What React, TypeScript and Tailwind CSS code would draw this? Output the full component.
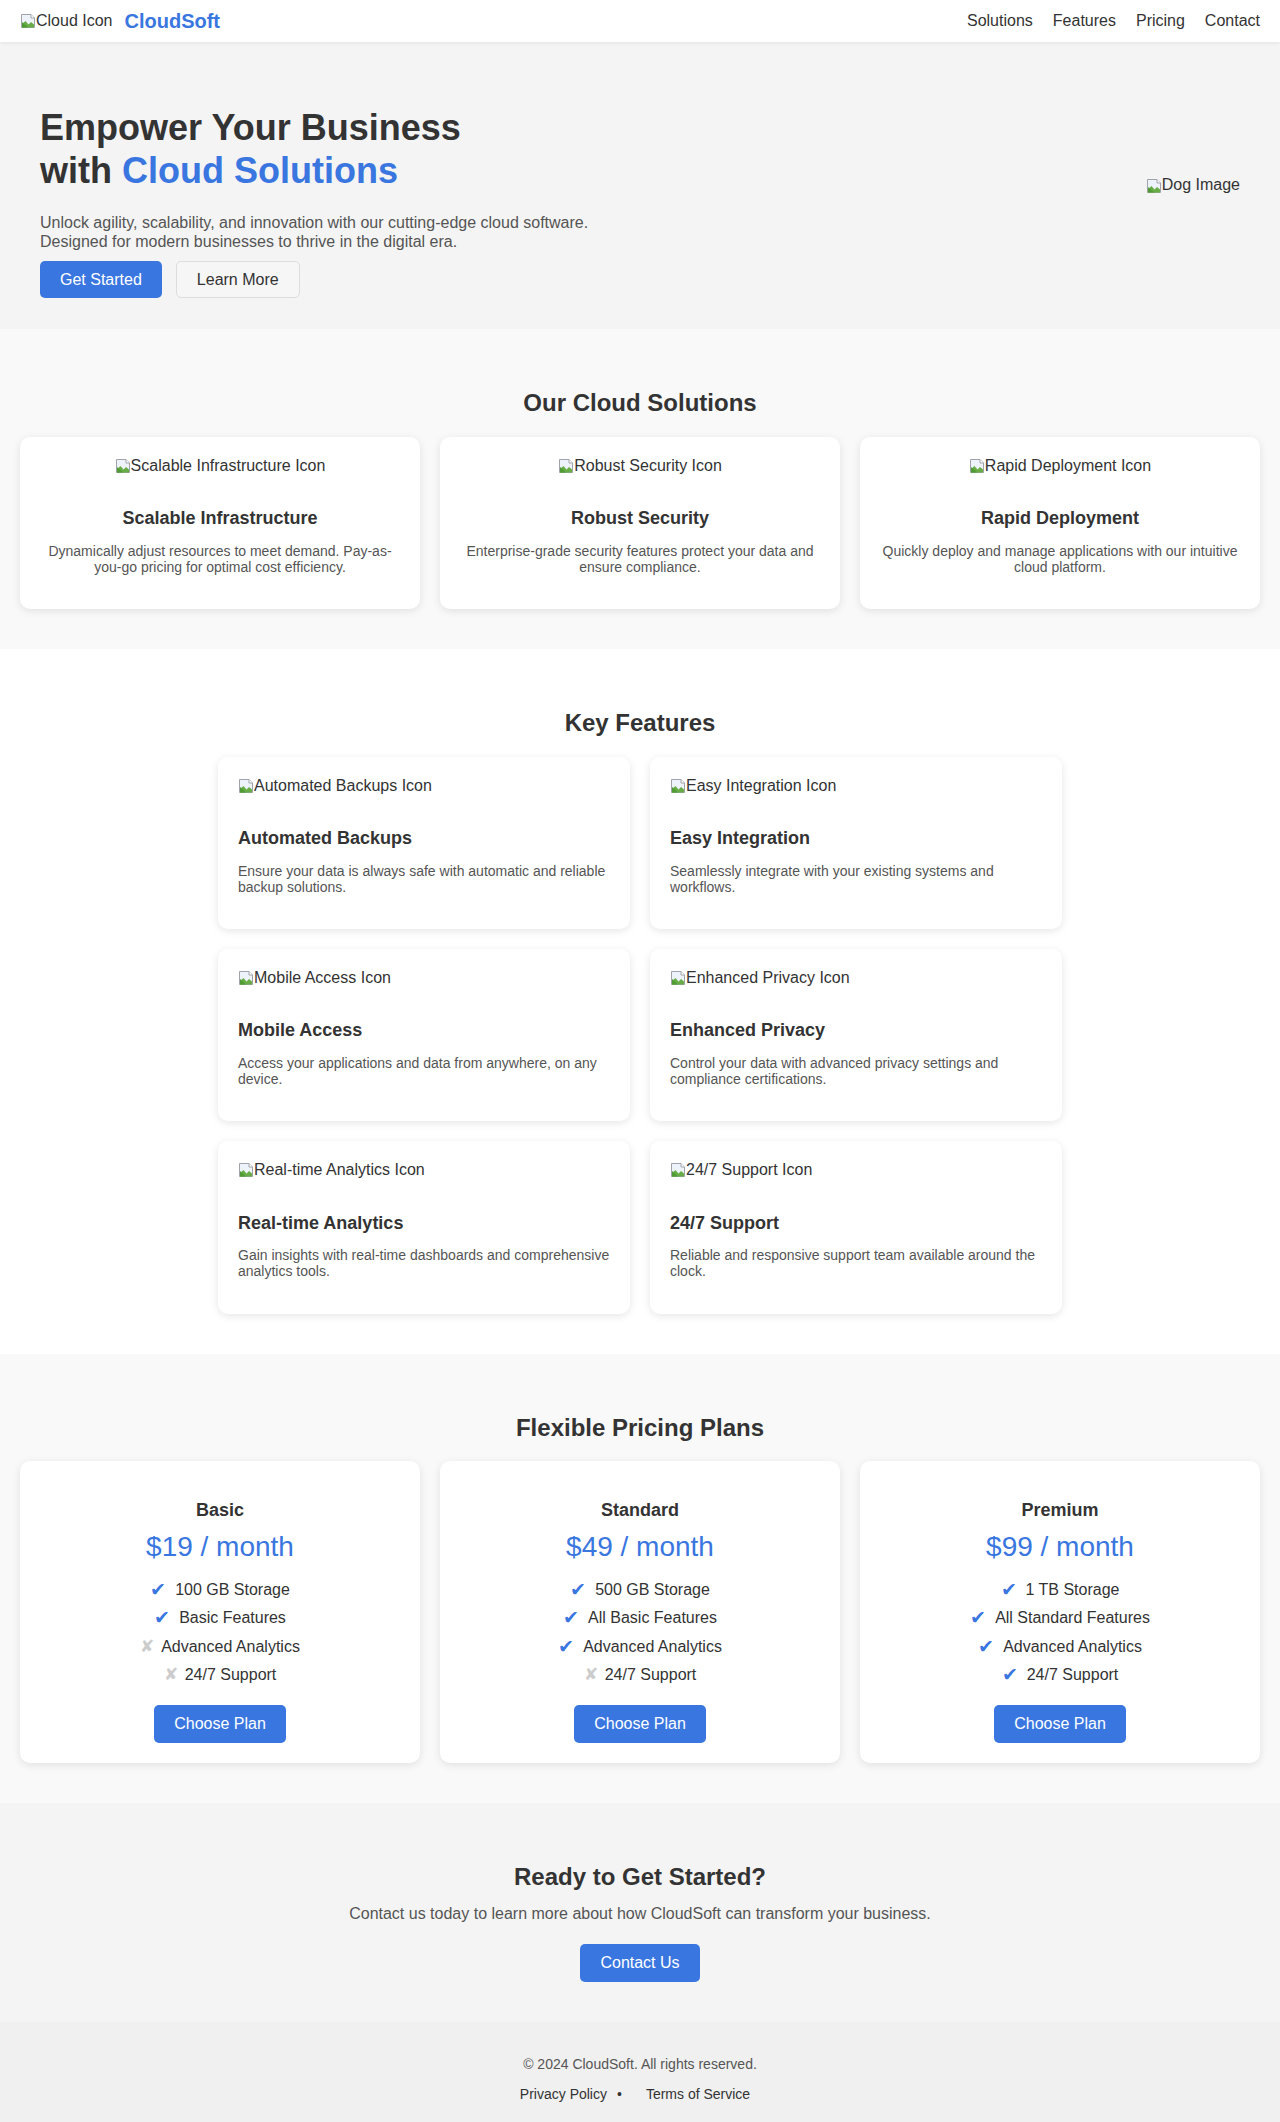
import React from "react";

function BrokenImg({ alt }: { alt: string }) {
  return (
    <span className="inline-flex items-center text-[16px] leading-[18.4px] text-[#333]">
      <svg width="16" height="16" viewBox="0 0 16 16" className="shrink-0">
        <path d="M1.5 1.5h9.5l3.5 3.5v9.5h-13z" fill="#eef3fb" stroke="#a0a4aa" strokeWidth="1" />
        <path d="M11 1.5v3.5h3.5" fill="#ffffff" stroke="#a0a4aa" strokeWidth="1" />
        <path d="M2 14.5V11l3.5-3 3 3.5L11 9l3 2.5v3z" fill="#67ac46" />
        <path d="M2 14.5h6L2 9z" fill="#4f9a34" />
      </svg>
      <span>{alt}</span>
    </span>
  );
}

const solutions = [
  {
    icon: "Scalable Infrastructure Icon",
    title: "Scalable Infrastructure",
    desc: "Dynamically adjust resources to meet demand. Pay-as-you-go pricing for optimal cost efficiency.",
  },
  {
    icon: "Robust Security Icon",
    title: "Robust Security",
    desc: "Enterprise-grade security features protect your data and ensure compliance.",
  },
  {
    icon: "Rapid Deployment Icon",
    title: "Rapid Deployment",
    desc: "Quickly deploy and manage applications with our intuitive cloud platform.",
  },
];

const features = [
  {
    icon: "Automated Backups Icon",
    title: "Automated Backups",
    desc: "Ensure your data is always safe with automatic and reliable backup solutions.",
  },
  {
    icon: "Easy Integration Icon",
    title: "Easy Integration",
    desc: "Seamlessly integrate with your existing systems and workflows.",
  },
  {
    icon: "Mobile Access Icon",
    title: "Mobile Access",
    desc: "Access your applications and data from anywhere, on any device.",
  },
  {
    icon: "Enhanced Privacy Icon",
    title: "Enhanced Privacy",
    desc: "Control your data with advanced privacy settings and compliance certifications.",
  },
  {
    icon: "Real-time Analytics Icon",
    title: "Real-time Analytics",
    desc: "Gain insights with real-time dashboards and comprehensive analytics tools.",
  },
  {
    icon: "24/7 Support Icon",
    title: "24/7 Support",
    desc: "Reliable and responsive support team available around the clock.",
  },
];

const plans = [
  {
    name: "Basic",
    price: "$19 / month",
    items: [
      { ok: true, text: "100 GB Storage" },
      { ok: true, text: "Basic Features" },
      { ok: false, text: "Advanced Analytics" },
      { ok: false, text: "24/7 Support" },
    ],
  },
  {
    name: "Standard",
    price: "$49 / month",
    items: [
      { ok: true, text: "500 GB Storage" },
      { ok: true, text: "All Basic Features" },
      { ok: true, text: "Advanced Analytics" },
      { ok: false, text: "24/7 Support" },
    ],
  },
  {
    name: "Premium",
    price: "$99 / month",
    items: [
      { ok: true, text: "1 TB Storage" },
      { ok: true, text: "All Standard Features" },
      { ok: true, text: "Advanced Analytics" },
      { ok: true, text: "24/7 Support" },
    ],
  },
];

function SectionTitle({ children }: { children: React.ReactNode }) {
  return (
    <h2 className="mt-5 mb-5 text-center text-[24px] font-bold leading-[27.6px] text-[#333]">
      {children}
    </h2>
  );
}

export default function App() {
  return (
    <div className="font-['Liberation_Sans',Arial,sans-serif] text-[#333] bg-white">
      {/* Header */}
      <header className="relative z-10 flex h-[42px] items-center justify-between bg-white px-5 shadow-[0_1px_4px_rgba(0,0,0,0.07)]">
        <div className="flex items-center">
          <BrokenImg alt="Cloud Icon" />
          <span className="ml-[12px] text-[20px] font-bold leading-[23px] text-[#3a76e0]">CloudSoft</span>
        </div>
        <nav className="flex gap-5 text-[16px] leading-[18.4px] text-[#333]">
          <a>Solutions</a>
          <a>Features</a>
          <a>Pricing</a>
          <a>Contact</a>
        </nav>
      </header>

      {/* Hero */}
      <section className="flex items-center justify-between bg-[#f4f4f4] px-10 py-[31px]">
        <div>
          <h1 className="mt-[33px] text-[36px] font-bold leading-[43.2px] text-[#333]">
            Empower Your Business
            <br />
            with <span className="text-[#3a76e0]">Cloud Solutions</span>
          </h1>
          <p className="mt-[22px] text-[16px] leading-[18.4px] text-[#555]">
            Unlock agility, scalability, and innovation with our cutting-edge cloud software.
            <br />
            Designed for modern businesses to thrive in the digital era.
          </p>
          <div className="mt-[10px] flex gap-[14px]">
            <button className="flex h-[37px] items-center rounded-[5px] bg-[#3a76e0] px-5 text-[16px] text-white">
              Get Started
            </button>
            <button className="flex h-[37px] items-center rounded-[5px] border border-[#dddddd] bg-[#f6f6f6] px-5 text-[16px] text-[#333]">
              Learn More
            </button>
          </div>
        </div>
        <BrokenImg alt="Dog Image" />
      </section>

      {/* Solutions */}
      <section className="bg-[#f9f9f9] px-5 py-10">
        <SectionTitle>Our Cloud Solutions</SectionTitle>
        <div className="grid grid-cols-3 gap-5">
          {solutions.map((s) => (
            <div
              key={s.title}
              className="rounded-[10px] bg-white px-5 pt-5 pb-[34px] text-center shadow-[0_2px_8px_rgba(0,0,0,0.1)]"
            >
              <div className="flex h-[18.4px] justify-center">
                <BrokenImg alt={s.icon} />
              </div>
              <h3 className="mt-[33px] text-[18px] font-bold leading-[20.7px] text-[#333]">{s.title}</h3>
              <p className="mt-[14px] text-[14px] leading-[16.1px] text-[#555]">{s.desc}</p>
            </div>
          ))}
        </div>
      </section>

      {/* Features */}
      <section className="bg-white px-5 py-10">
        <SectionTitle>Key Features</SectionTitle>
        <div className="mx-auto grid w-[844px] grid-cols-2 gap-5">
          {features.map((f) => (
            <div
              key={f.title}
              className="rounded-[10px] bg-white px-5 pt-5 pb-[34px] text-left shadow-[0_2px_8px_rgba(0,0,0,0.1)]"
            >
              <div className="flex h-[18.4px]">
                <BrokenImg alt={f.icon} />
              </div>
              <h3 className="mt-[33px] text-[18px] font-bold leading-[20.7px] text-[#333]">{f.title}</h3>
              <p className="mt-[14px] text-[14px] leading-[16.1px] text-[#555]">{f.desc}</p>
            </div>
          ))}
        </div>
      </section>

      {/* Pricing */}
      <section className="bg-[#f9f9f9] px-5 py-10">
        <SectionTitle>Flexible Pricing Plans</SectionTitle>
        <div className="grid grid-cols-3 gap-5">
          {plans.map((p) => (
            <div
              key={p.name}
              className="flex flex-col items-center rounded-[10px] bg-white p-5 text-center shadow-[0_2px_8px_rgba(0,0,0,0.1)]"
            >
              <h3 className="mt-[19px] text-[18px] font-bold leading-[20.7px] text-[#333]">{p.name}</h3>
              <div className="mt-[10px] text-[28px] leading-[32.2px] text-[#3a76e0]">{p.price}</div>
              <ul className="mt-[18px] flex flex-col items-center gap-[10px] text-[16px] leading-[18.4px] text-[#333]">
                {p.items.map((it) => (
                  <li key={it.text} className="flex items-center">
                    {it.ok ? (
                      <span className="mr-[10px] inline-block w-[15px] text-center text-[19px] leading-[18.4px] text-[#3a76e0]">✔</span>
                    ) : (
                      <span className="mr-[10px] inline-block w-[11px] text-center text-[17px] leading-[18.4px] text-[#cccccc]">✘</span>
                    )}
                    <span>{it.text}</span>
                  </li>
                ))}
              </ul>
              <button className="mt-5 flex h-[38px] items-center rounded-[5px] bg-[#3a76e0] px-5 text-[16px] text-white">
                Choose Plan
              </button>
            </div>
          ))}
        </div>
      </section>

      {/* CTA */}
      <section className="bg-[#f4f4f4] px-5 py-10 text-center">
        <h2 className="mt-5 mb-[15px] text-[24px] font-bold leading-[27.6px] text-[#333]">Ready to Get Started?</h2>
        <p className="mb-5 text-[16px] leading-[18.4px] text-[#555]">
          Contact us today to learn more about how CloudSoft can transform your business.
        </p>
        <div className="flex justify-center">
          <button className="flex h-[38px] items-center rounded-[5px] bg-[#3a76e0] px-5 text-[16px] text-white">
            Contact Us
          </button>
        </div>
      </section>

      {/* Footer */}
      <footer className="bg-[#f0f0f0] py-5 text-center text-[14px] leading-[16.1px]">
        <p className="my-[14px] text-[#555]">© 2024 CloudSoft. All rights reserved.</p>
        <div className="flex justify-center pr-[10px] text-[#333]">
          <a>Privacy Policy</a>
          <span className="ml-[10px]">•</span>
          <a className="ml-[24px]">Terms of Service</a>
        </div>
      </footer>
    </div>
  );
}
